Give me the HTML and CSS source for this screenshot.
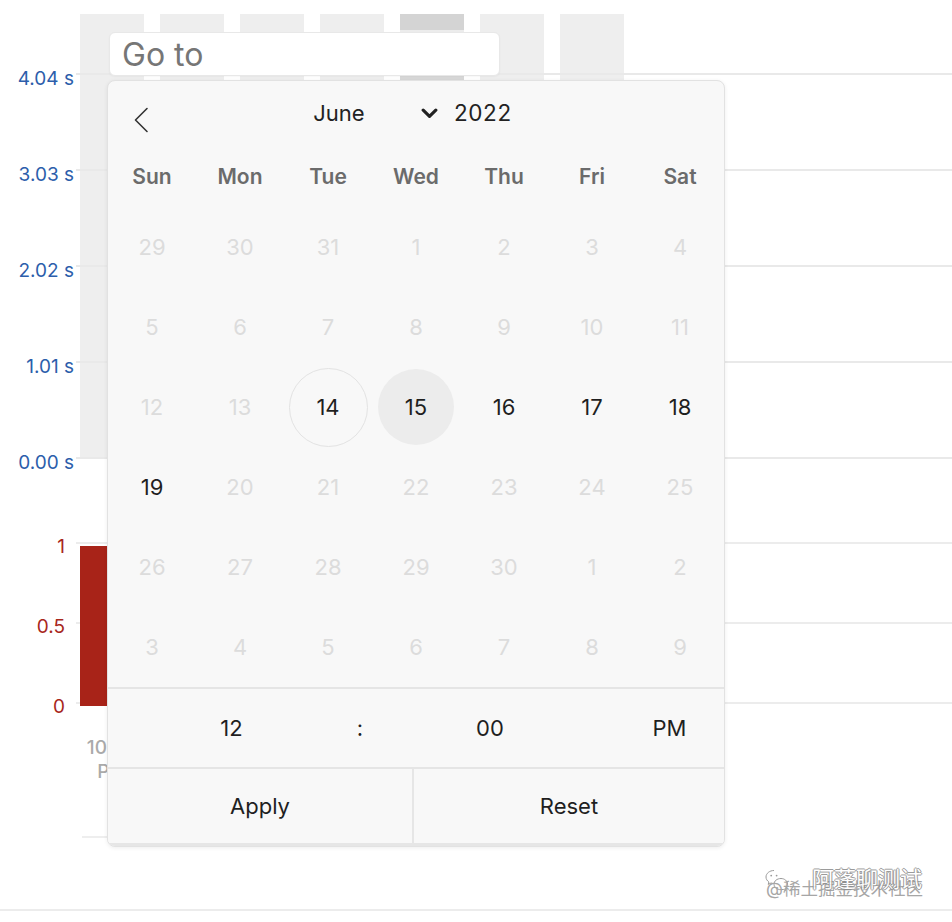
FILE: index.html
```html
<!DOCTYPE html>
<html lang="en">
<head>
<meta charset="utf-8">
<title>Go to date</title>
<link rel="stylesheet" href="styles.css">
</head>
<body>
<div class="page">
  <section class="chart chart-upper">
    <div class="axis axis-time">
      <span>4.04 s</span>
      <span>3.03 s</span>
      <span>2.02 s</span>
      <span>1.01 s</span>
      <span>0.00 s</span>
    </div>
    <div class="plot plot-upper">
      <div class="bar"></div>
      <div class="bar"></div>
      <div class="bar"></div>
      <div class="bar"></div>
      <div class="bar bar-hl"></div>
      <div class="bar"></div>
      <div class="bar"></div>
    </div>
  </section>

  <section class="chart chart-lower">
    <div class="axis axis-count">
      <span>1</span>
      <span>0.5</span>
      <span>0</span>
    </div>
    <div class="plot plot-lower">
      <div class="col">
        <div class="bar-red"></div>
        <div class="xlabel">10:00<br>PM</div>
      </div>
      <div class="x-rule"></div>
    </div>
  </section>

  <footer class="footer">
    <div class="watermark">
      <svg class="wm-icon" width="26" height="26" viewBox="0 0 26 26" fill="none" stroke="#9a9a9a" stroke-width="1">
        <path d="M10 2.5c-4.4 0-8 2.9-8 6.5 0 2 1.1 3.8 2.9 5l-0.7 2.4 2.8-1.4c1 0.3 2 0.5 3 0.5"/>
        <circle cx="7.2" cy="7.6" r="0.9" fill="#9a9a9a" stroke="none"/>
        <circle cx="12.6" cy="7.6" r="0.9" fill="#9a9a9a" stroke="none"/>
        <path d="M17 10.5c-3.9 0-7 2.5-7 5.6s3.1 5.6 7 5.6c0.8 0 1.6-0.1 2.3-0.3l2.3 1.2-0.6-2c1.6-1 2.6-2.6 2.6-4.5 0-3.1-3.1-5.6-6.6-5.6z"/>
      </svg>
      <span class="wm-sub">@稀土掘金技术社区</span>
      <span class="wm-main">阿蓬聊测试</span>
    </div>
  </footer>

  <div class="goto">Go to</div>

  <div class="picker">
    <div class="picker-head">
      <div class="prev">
        <svg width="16" height="26" viewBox="0 0 16 26" fill="none" stroke="#333" stroke-width="1.6" stroke-linecap="round" stroke-linejoin="round"><path d="M14 1.5 2.5 13 14 24.5"/></svg>
      </div>
      <div class="month">
        <span class="month-text">June</span>
        <svg class="caret" width="17" height="11" viewBox="0 0 17 11" fill="none" stroke="#222" stroke-width="3.2" stroke-linecap="round" stroke-linejoin="round"><path d="M2.2 2.2 8.5 8.3 14.8 2.2"/></svg>
      </div>
      <div class="year">2022</div>
    </div>

    <div class="weekdays">
      <span>Sun</span><span>Mon</span><span>Tue</span><span>Wed</span><span>Thu</span><span>Fri</span><span>Sat</span>
    </div>

    <div class="days">
      <div class="day off"><span>29</span></div>
      <div class="day off"><span>30</span></div>
      <div class="day off"><span>31</span></div>
      <div class="day off"><span>1</span></div>
      <div class="day off"><span>2</span></div>
      <div class="day off"><span>3</span></div>
      <div class="day off"><span>4</span></div>

      <div class="day off"><span>5</span></div>
      <div class="day off"><span>6</span></div>
      <div class="day off"><span>7</span></div>
      <div class="day off"><span>8</span></div>
      <div class="day off"><span>9</span></div>
      <div class="day off"><span>10</span></div>
      <div class="day off"><span>11</span></div>

      <div class="day off"><span>12</span></div>
      <div class="day off"><span>13</span></div>
      <div class="day today"><span>14</span></div>
      <div class="day selected"><span>15</span></div>
      <div class="day"><span>16</span></div>
      <div class="day"><span>17</span></div>
      <div class="day"><span>18</span></div>

      <div class="day"><span>19</span></div>
      <div class="day off"><span>20</span></div>
      <div class="day off"><span>21</span></div>
      <div class="day off"><span>22</span></div>
      <div class="day off"><span>23</span></div>
      <div class="day off"><span>24</span></div>
      <div class="day off"><span>25</span></div>

      <div class="day off"><span>26</span></div>
      <div class="day off"><span>27</span></div>
      <div class="day off"><span>28</span></div>
      <div class="day off"><span>29</span></div>
      <div class="day off"><span>30</span></div>
      <div class="day off"><span>1</span></div>
      <div class="day off"><span>2</span></div>

      <div class="day off"><span>3</span></div>
      <div class="day off"><span>4</span></div>
      <div class="day off"><span>5</span></div>
      <div class="day off"><span>6</span></div>
      <div class="day off"><span>7</span></div>
      <div class="day off"><span>8</span></div>
      <div class="day off"><span>9</span></div>
    </div>

    <div class="time">
      <span>12</span>
      <span>:</span>
      <span>00</span>
      <span>PM</span>
    </div>

    <div class="actions">
      <button class="btn btn-apply" type="button">Apply</button>
      <button class="btn" type="button">Reset</button>
    </div>
  </div>
</div>
</body>
</html>
```

FILE: styles.css
```css
html, body {
  margin: 0;
  padding: 0;
  background: #ffffff;
}

body {
  font-family: Inter, "Noto Sans", "Liberation Sans", "Noto Sans CJK SC", sans-serif;
  color: #222;
}

.page {
  position: relative;
  width: 952px;
  height: 922px;
  overflow: hidden;
}

/* ---------- charts ---------- */
.chart {
  display: grid;
  grid-template-columns: 76px 1fr;
}

.chart-upper {
  height: 460px;
}

.chart-lower {
  height: 405px;
}

.axis {
  display: flex;
  flex-direction: column;
  align-items: flex-end;
  font-size: 19px;
  box-sizing: border-box;
}

.axis-time {
  padding-top: 31px;
  padding-right: 2px;
  color: #2c5eab;
}

.axis-time span {
  height: 96px;
  line-height: 96px;
}

.axis-count {
  padding-top: 47px;
  padding-right: 11px;
  color: #a8271c;
}

.axis-count span {
  height: 80px;
  line-height: 80px;
}

.plot {
  position: relative;
}

.plot-upper {
  display: flex;
  align-items: flex-start;
  gap: 16px;
  padding: 14px 0 0 4px;
}

.plot-upper::after {
  content: "";
  position: absolute;
  inset: 0;
  pointer-events: none;
  background-image: repeating-linear-gradient(to bottom, #e9e9e9 0 2px, transparent 2px 96px);
  background-position: 0 73px;
  background-repeat: repeat-y;
  background-size: 100% 96px;
}

.bar {
  width: 64px;
  height: 444px;
  background: #eeeeee;
}

.bar-hl {
  background: linear-gradient(to bottom, #d4d4d4 0 16px, #ececec 16px 59px, #d8d8d8 59px 66px, #ececec 66px);
}

.plot-lower {
  padding: 86px 0 0 4px;
  background-image:
    linear-gradient(#ececec, #ececec),
    linear-gradient(#ececec, #ececec),
    linear-gradient(#ececec, #ececec);
  background-size: 100% 2px;
  background-repeat: no-repeat;
  background-position: 0 82px, 0 162px, 0 242px;
}

.col {
  width: 64px;
}

.bar-red {
  height: 160px;
  background: #a82318;
}

.xlabel {
  margin-top: 30px;
  font-size: 19px;
  line-height: 24px;
  text-align: center;
  color: #aaaaaa;
  font-weight: 500;
  white-space: nowrap;
}

.x-rule {
  margin: 52px 0 0 2px;
  width: 600px;
  height: 2px;
  background: #eeeeee;
}

/* ---------- footer / watermark ---------- */
.footer {
  height: 41px;
  border-bottom: 2px solid #ececec;
  display: flex;
  justify-content: flex-end;
  align-items: flex-start;
  padding: 3px 24px 0 0;
  box-sizing: content-box;
}

.watermark {
  display: grid;
  width: 164px;
  height: 30px;
}

.watermark > * {
  grid-area: 1 / 1;
}

.wm-icon {
  justify-self: start;
  align-self: start;
}

.wm-sub {
  align-self: end;
  justify-self: start;
  padding-left: 2px;
  font-size: 17.5px;
  line-height: 18px;
  color: #a6a6a6;
}

.wm-main {
  justify-self: end;
  align-self: start;
  padding-right: 6px;
  font-size: 22px;
  line-height: 22px;
  color: #ffffff;
  text-shadow: -1px 0 #8a8a8a, 1px 0 #8a8a8a, 0 -1px #8a8a8a, 0 1px #8a8a8a;
  opacity: 0.85;
}

/* ---------- go-to input ---------- */
.goto {
  position: absolute;
  left: 109px;
  top: 32px;
  width: 391px;
  height: 44px;
  box-sizing: border-box;
  background: #ffffff;
  border: 1px solid #e8e8e8;
  border-radius: 6px;
  padding-left: 12px;
  display: flex;
  align-items: center;
  font-size: 32px;
  color: #767676;
  box-shadow: 0 1px 2px rgba(0, 0, 0, 0.04);
}

/* ---------- date picker popup ---------- */
.picker {
  position: absolute;
  left: 107px;
  top: 80px;
  width: 618px;
  box-sizing: border-box;
  background: #f8f8f8;
  border: 1px solid #e2e2e2;
  border-radius: 8px;
  box-shadow: 0 1px 4px rgba(0, 0, 0, 0.07);
  overflow: hidden;
}

.picker-head {
  display: flex;
  align-items: flex-start;
  height: 65px;
}

.prev {
  width: 132px;
  box-sizing: border-box;
  padding: 26px 0 0 25px;
  line-height: 0;
}

.month {
  width: 198px;
  margin-top: 19px;
  height: 26px;
  display: grid;
  grid-template-columns: 1fr auto 1fr;
  align-items: center;
}

.month-text {
  grid-column: 2;
  font-size: 22px;
  line-height: 26px;
}

.caret {
  grid-column: 3;
  justify-self: end;
}

.year {
  margin: 19px 0 0 16px;
  font-size: 22.5px;
  line-height: 26px;
  letter-spacing: 0.6px;
}

.weekdays {
  display: grid;
  grid-template-columns: repeat(7, 88px);
  height: 61px;
  align-items: center;
  text-align: center;
  font-size: 21px;
  font-weight: 600;
  color: #6b6b6b;
}

.days {
  display: grid;
  grid-template-columns: repeat(7, 88px);
  grid-auto-rows: 80px;
}

.day {
  display: flex;
  align-items: center;
  justify-content: center;
  font-size: 22px;
  color: #1f1f1f;
}

.day span {
  width: 76px;
  height: 76px;
  border-radius: 50%;
  display: flex;
  align-items: center;
  justify-content: center;
  box-sizing: border-box;
}

.day.off {
  color: #dcdcdc;
}

.day.today span {
  width: 79px;
  height: 79px;
  border: 1.5px solid #e3e3e3;
}

.day.selected span {
  background: #ececec;
}

.time {
  display: grid;
  grid-template-columns: 247px 10px 250px 1fr;
  height: 78px;
  align-items: center;
  text-align: center;
  border-top: 2px solid #e5e5e5;
  border-bottom: 2px solid #e5e5e5;
  font-size: 22px;
  color: #1f1f1f;
}

.actions {
  display: grid;
  grid-template-columns: 306px 1fr;
  border-bottom: 3px solid #e6e6e6;
}

.btn {
  height: 74px;
  margin: 0;
  padding: 0;
  border: 0;
  background: #f8f8f8;
  font-family: inherit;
  font-size: 22px;
  color: #1f1f1f;
}

.btn-apply {
  border-right: 2px solid #e6e6e6;
}
```
